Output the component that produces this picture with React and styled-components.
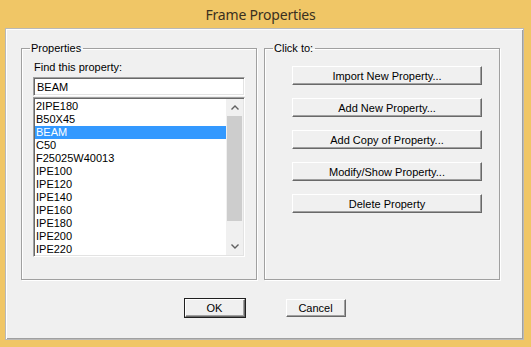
import React, { useState } from 'react';
import styled, { createGlobalStyle } from 'styled-components';

const GlobalStyle = createGlobalStyle`
  html, body {
    margin: 0;
    padding: 0;
    background: #f0c666;
  }
  * { box-sizing: border-box; }
`;

const Window = styled.div`
  width: 531px;
  height: 347px;
  display: flex;
  flex-direction: column;
  background: #f0c666;
  font-family: 'Liberation Sans', Arial, sans-serif;
  font-size: 11px;
  color: #000;
`;

const TitleBar = styled.div`
  height: 28px;
  display: flex;
  align-items: center;
  justify-content: center;
  font-family: 'Noto Sans', 'Open Sans', sans-serif;
  font-size: 14px;
  letter-spacing: -0.2px;
  color: #3a3020;
  padding: 1px 10px 0 0;
`;

const Client = styled.div`
  flex: 1;
  margin: 0 7px 7px 5px;
  background: #f0f0f0;
  border: 1px solid #b9b9b9;
  box-shadow: inset 1px 1px 0 #ffffff, inset -1px -1px 0 #a0a0a0;
  display: flex;
  flex-direction: column;
  padding: 13px 0 0 15px;
`;

const Groups = styled.div`
  display: flex;
  gap: 7px;
`;

const Group = styled.fieldset`
  margin: 0;
  width: 236px;
  height: 238px;
  min-width: 0;
  padding: 0;
  border: 1px solid #a0a0a0;
  box-shadow: inset 1px 1px 0 #ffffff, 1px 1px 0 #ffffff;
`;

const Legend = styled.legend`
  padding: 0 2px 0 1px;
  margin-left: 8px;
  line-height: 13px;
  font-size: 11px;
`;

const GroupBody = styled.div`
  display: flex;
  flex-direction: column;
  padding: ${(p) => p.$pad};
`;

const Label = styled.div`
  line-height: 13px;
  margin: 6px 0 3px 1px;
`;

const Sunken = styled.div`
  border: 1px solid;
  border-color: #a0a0a0 #ffffff #ffffff #a0a0a0;
  box-shadow: inset 1px 1px 0 #696969, inset -1px -1px 0 #e3e3e3;
  background: #fff;
  padding: 1px;
`;

const TextBox = styled(Sunken)`
  width: 212px;
  height: 19px;
  display: flex;
  align-items: center;
  padding-left: 3px;
`;

const ListBox = styled(Sunken)`
  width: 212px;
  height: 160px;
  margin-top: 1px;
  display: flex;
`;

const Items = styled.div`
  flex: 1;
  overflow: hidden;
  padding-top: 1px;
`;

const Item = styled.div`
  height: 13px;
  line-height: 13px;
  padding-left: 1px;
  background: ${(p) => (p.$selected ? '#3399ff' : 'transparent')};
  color: ${(p) => (p.$selected ? '#fff' : '#000')};
`;

const ScrollBar = styled.div`
  width: 17px;
  background: #f0f0f0;
  display: flex;
  flex-direction: column;
`;

const Arrow = styled.div`
  height: 17px;
  display: flex;
  align-items: center;
  justify-content: center;
`;

const Thumb = styled.div`
  height: 105px;
  margin: 0 1px;
  background: #cdcdcd;
`;

const Track = styled.div`
  flex: 1;
`;

const Raised = styled.button`
  font-family: 'Liberation Sans', Arial, sans-serif;
  font-size: 11px;
  color: #000;
  background: #f0f0f0;
  border: 1px solid;
  border-color: #ffffff #696969 #696969 #ffffff;
  box-shadow: inset -1px -1px 0 #a0a0a0;
  padding: 0;
  cursor: pointer;
`;

const ActionButton = styled(Raised)`
  width: 190px;
  height: 19px;
  margin-bottom: 13px;
`;

const DialogButton = styled(Raised)`
  width: 60px;
  height: 18px;
  outline: ${(p) => (p.$default ? '1px solid #202020' : 'none')};
`;

const Footer = styled.div`
  display: flex;
  justify-content: center;
  gap: 41px;
  margin: 19px 0 0 -14px;
`;

const Chevron = ({ up }) => (
  <svg width="8" height="5" viewBox="0 0 8 5">
    <path
      d={up ? 'M0.5 4.5 L4 1 L7.5 4.5' : 'M0.5 0.5 L4 4 L7.5 0.5'}
      fill="none"
      stroke="#606060"
      strokeWidth="1.4"
    />
  </svg>
);

const properties = [
  '2IPE180', 'B50X45', 'BEAM', 'C50', 'F25025W40013', 'IPE100',
  'IPE120', 'IPE140', 'IPE160', 'IPE180', 'IPE200', 'IPE220',
];

const actions = [
  'Import New Property...',
  'Add New Property...',
  'Add Copy of Property...',
  'Modify/Show Property...',
  'Delete Property',
];

export default function App() {
  const [selected, setSelected] = useState('BEAM');

  return (
    <Window>
      <GlobalStyle />
      <TitleBar>Frame Properties</TitleBar>
      <Client>
        <Groups>
          <Group>
            <Legend>Properties</Legend>
            <GroupBody $pad="0 0 0 11px">
              <Label>Find this property:</Label>
              <TextBox>{selected}</TextBox>
              <ListBox>
                <Items>
                  {properties.map((name) => (
                    <Item key={name} $selected={name === selected} onClick={() => setSelected(name)}>
                      {name}
                    </Item>
                  ))}
                </Items>
                <ScrollBar>
                  <Arrow><Chevron up /></Arrow>
                  <Thumb />
                  <Track />
                  <Arrow><Chevron /></Arrow>
                </ScrollBar>
              </ListBox>
            </GroupBody>
          </Group>
          <Group>
            <Legend>Click to:</Legend>
            <GroupBody $pad="11px 0 0 27px">
              {actions.map((a) => (
                <ActionButton key={a}>{a}</ActionButton>
              ))}
            </GroupBody>
          </Group>
        </Groups>
        <Footer>
          <DialogButton $default>OK</DialogButton>
          <DialogButton>Cancel</DialogButton>
        </Footer>
      </Client>
    </Window>
  );
}
